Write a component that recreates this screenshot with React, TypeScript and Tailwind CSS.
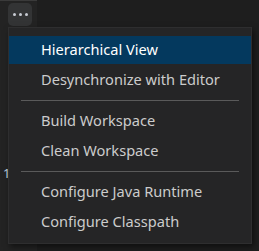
const groups = [
  ['Hierarchical View', 'Desynchronize with Editor'],
  ['Build Workspace', 'Clean Workspace'],
  ['Configure Java Runtime', 'Configure Classpath'],
]

export default function App() {
  return (
    <div
      className="relative h-[251px] w-[259px] overflow-hidden bg-[#1e1e1e] text-[#cccccc]"
      style={{ fontFamily: '"Noto Sans", "Open Sans", sans-serif' }}
    >
      <div className="absolute left-0 top-0 h-full w-[37px] border-t border-[#3a3a3a] bg-[#232323]">
        <div className="absolute left-[3px] top-[164px] text-[13px] leading-[16px] text-[#c6d4e0]">1</div>
      </div>

      <div className="absolute left-[8px] top-[3px] flex h-[23px] w-[24px] items-center justify-center gap-[3px] rounded-[5px] bg-[#333435]">
        <span className="h-[3px] w-[3px] rounded-full bg-[#c8ccd4]" />
        <span className="h-[3px] w-[3px] rounded-full bg-[#c8ccd4]" />
        <span className="h-[3px] w-[3px] rounded-full bg-[#c8ccd4]" />
      </div>

      <div className="absolute left-[8px] top-[27px] w-[244px] border border-[#2e2e2f] bg-[#252526] pb-[6px] pt-[7px] shadow-[2px_3px_6px_rgba(0,0,0,0.5)]">
        {groups.map((group, gi) => (
          <div key={gi}>
            {gi > 0 && (
              <div className="flex h-[11px] items-center px-[12px]">
                <div className="h-px w-full bg-[#5a5a5a]" />
              </div>
            )}
            {group.map((label) => {
              const active = label === 'Hierarchical View'
              return (
                <div key={label} className="flex h-[30px] items-center">
                  <div
                    className={
                      active
                        ? 'flex h-[28px] w-full items-center bg-[#04395e] pl-[32px] text-[14.6px] text-white'
                        : 'flex h-[28px] w-full items-center pl-[32px] text-[14.6px]'
                    }
                  >
                    {label}
                  </div>
                </div>
              )
            })}
          </div>
        ))}
      </div>
    </div>
  )
}
